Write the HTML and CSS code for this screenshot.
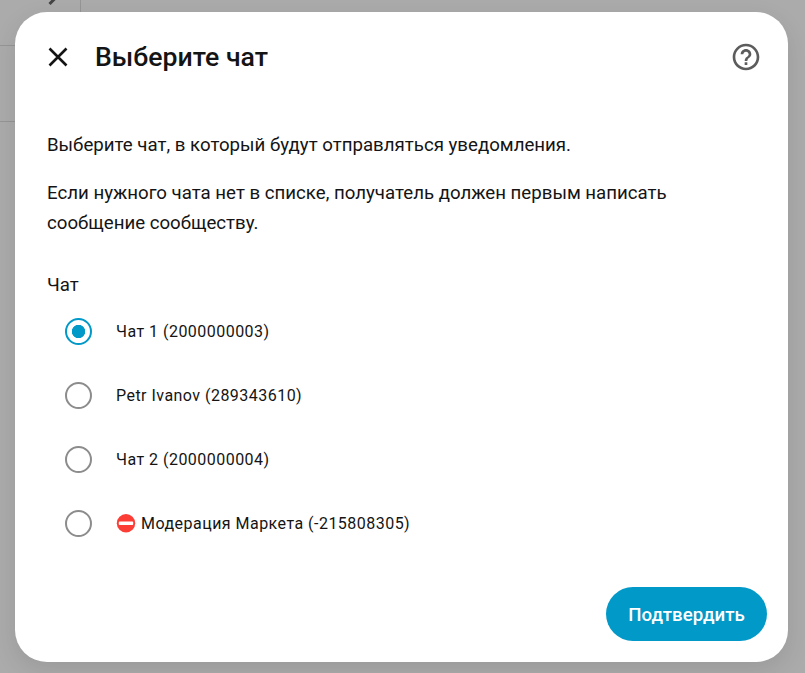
FILE: index.html
```html
<!DOCTYPE html>
<html lang="ru">
    <head>
        <meta charset="UTF-8">
        <meta name="viewport" content="width=device-width, initial-scale=1.0">
        <title>Выберите чат</title>
        <link rel="stylesheet" href="styles.css">
    </head>
    <body>
        <div class="page">
            <div class="page__header">
                <svg class="page__edit" width="14" height="6" viewBox="0 0 14 6"><path d="M3.500 4L8.500 -1"/></svg>
            </div>
            <div class="page__row"></div>
        </div>
        <div class="dialog" role="dialog">
            <header class="dialog__header">
                <button class="dialog__close" type="button" aria-label="Закрыть">
                    <svg width="20" height="20" viewBox="0 0 20 20"><path d="M1.500 1.500L18.500 18.500M18.500 1.500L1.500 18.500"/></svg>
                </button>
                <h1 class="dialog__title">Выберите чат</h1>
                <button class="dialog__help" type="button" aria-label="Справка">
                    <svg width="32" height="32" viewBox="0 0 24 24"><path d="M11 18h2v-2h-2v2zm1-16C6.480 2 2 6.480 2 12s4.480 10 10 10 10-4.480 10-10S17.520 2 12 2zm0 18c-4.410 0-8-3.590-8-8s3.590-8 8-8 8 3.590 8 8-3.590 8-8 8zm0-14c-2.210 0-4 1.790-4 4h2c0-1.100.9-2 2-2s2 .9 2 2c0 2-3 1.750-3 5h2c0-2.250 3-2.500 3-5 0-2.210-1.790-4-4-4z"/></svg>
                </button>
            </header>
            <div class="dialog__body">
                <p>Выберите чат, в который будут отправляться уведомления.</p>
                <p>Если нужного чата нет в списке, получатель должен первым написать сообщение сообществу.</p>
            </div>
            <form class="chats">
                <div class="chats__label">Чат</div>
                <label class="chats__item">
                    <input type="radio" name="chat" checked>
                    <span>Чат 1 (2000000003)</span>
                </label>
                <label class="chats__item">
                    <input type="radio" name="chat">
                    <span>Petr Ivanov (289343610)</span>
                </label>
                <label class="chats__item">
                    <input type="radio" name="chat">
                    <span>Чат 2 (2000000004)</span>
                </label>
                <label class="chats__item">
                    <input type="radio" name="chat">
                    <svg class="chats__stop" width="20" height="20" viewBox="0 0 20 20"><circle cx="10" cy="10.300" r="9.200"/><rect x="2.800" y="8.600" width="14.400" height="3.400" rx="0.800"/></svg>
                    <span>Модерация Маркета (-215808305)</span>
                </label>
            </form>
            <footer class="dialog__footer">
                <button class="dialog__submit" type="button">Подтвердить</button>
            </footer>
        </div>
    </body>
</html>
```

FILE: styles.css
```css
*, *:before, *:after {
    box-sizing: border-box;
}

body {
    margin: 0;
    height: 673px;
    overflow: hidden;
    background: #ababab;
    color: #141414;
    font-family: Roboto, sans-serif;
}

button {
    border: 0;
    padding: 0;
    background: none;
    font-family: inherit;
    cursor: pointer;
}

svg {
    display: block;
}

/* page behind the dialog */
.page {
    width: 81px;
    height: 122px;
    border-right: 1px solid #959595;
}

.page__header {
    height: 46px;
    padding-left: 46px;
    border-bottom: 1px solid #959595;
}

.page__row {
    height: 76px;
    border-bottom: 1px solid #959595;
}

.page__edit {
    fill: none;
    stroke: #444;
    stroke-width: 3;
}

.dialog {
    position: absolute;
    top: 12px;
    left: 15px;
    width: 773px;
    height: 650px;
    display: flex;
    flex-direction: column;
    padding: 29px 21px 21px 32px;
    border-radius: 32px;
    background: #fff;
    box-shadow: 0 8px 24px rgba(0,0,0,0.1);
}

.dialog__header {
    display: flex;
    align-items: center;
    height: 32px;
    padding-right: 5px;
}

.dialog__close {
    width: 22px;
    padding-left: 1px;
}

.dialog__close svg {
    fill: none;
    stroke: #141414;
    stroke-width: 2.6;
}

.dialog__title {
    flex: 1;
    margin: 0 0 0 26px;
    font-size: 26.67px;
    font-weight: 500;
    line-height: 32px;
}

.dialog__help svg {
    fill: #5c5c5c;
}

.dialog__body {
    margin-top: 57px;
    font-size: 18.67px;
    line-height: 30px;
}

.dialog__body p {
    margin: 0 0 18px;
}

.chats__label {
    margin-top: 14px;
    margin-bottom: -1px;
    font-size: 18.67px;
    line-height: 30px;
}

.chats__item {
    display: flex;
    align-items: center;
    height: 64px;
    padding-left: 18px;
    font-size: 16px;
    letter-spacing: 0.47px;
}

.chats__item input {
    appearance: none;
    width: 27px;
    height: 27px;
    margin: 0 24px 0 0;
    border: 2px solid #8c8c8c;
    border-radius: 50%;
}

.chats__item input:checked {
    border-color: #0099c8;
    background: radial-gradient(circle, #0099c8 6.3px, transparent 7px);
}

.chats__stop {
    margin-right: 5px;
}

.chats__stop circle {
    fill: #fc3d36;
}

.chats__stop rect {
    fill: #fff;
}

.dialog__footer {
    display: flex;
    justify-content: flex-end;
    margin-top: auto;
}

.dialog__submit {
    width: 161px;
    height: 54px;
    padding-top: 2px;
    border-radius: 27px;
    background: #0099c8;
    color: #fff;
    font-size: 18.67px;
    font-weight: 500;
}
```
